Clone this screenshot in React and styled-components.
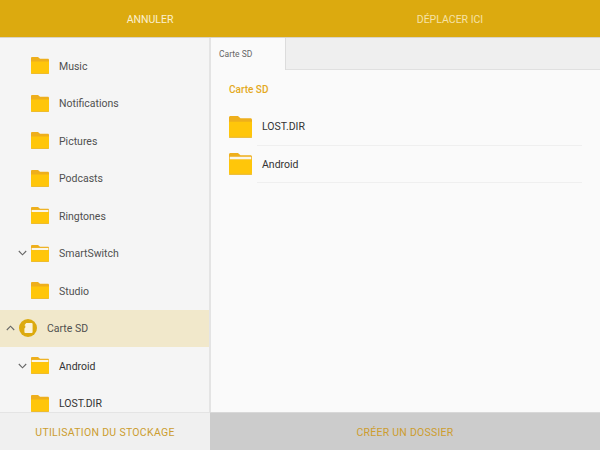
import styled, { createGlobalStyle } from "styled-components";

const GlobalStyle = createGlobalStyle`
  html, body {
    margin: 0;
    padding: 0;
    overflow: hidden;
  }
  body {
    font-family: Roboto, "Liberation Sans", sans-serif;
  }
`;

const Page = styled.div`
  width: 600px;
  height: 450px;
  display: flex;
  flex-direction: column;
  overflow: hidden;
  background: #fafafa;
`;

const TopBar = styled.div`
  height: 38px;
  box-sizing: border-box;
  flex: none;
  display: grid;
  grid-template-columns: 300px 300px;
  background: #dcaa0f;
  border-bottom: 1px solid #d8d4c8;
`;

const TopAction = styled.div`
  display: flex;
  align-items: center;
  justify-content: center;
  padding-top: 1px;
  font-size: 10.5px;
  color: ${({ $dim }) => ($dim ? "#f6e2a6" : "#fbf0cf")};
`;

const Body = styled.div`
  flex: 1;
  min-height: 0;
  display: flex;
`;

const Sidebar = styled.div`
  width: 211px;
  box-sizing: border-box;
  flex: none;
  padding-top: 9px;
  background: #f5f5f5;
  border-right: 2px solid #e4e4e4;
  overflow: hidden;
`;

const TreeRow = styled.div`
  height: 37.5px;
  display: flex;
  align-items: center;
  padding-left: ${({ $root }) => ($root ? "6px" : "18px")};
  background: ${({ $selected }) => ($selected ? "#f1e8cb" : "transparent")};
`;

const Chevron = styled.svg`
  width: 9px;
  height: 6px;
  flex: none;
  fill: none;
  stroke: #666;
  stroke-width: 1.1;
`;

const ChevronSlot = styled.div`
  width: 13px;
  flex: none;
  display: flex;
  align-items: center;
`;

const TreeLabel = styled.span`
  margin-left: 10px;
  padding-top: 1px;
  font-size: 10.5px;
  color: ${({ $dark }) => ($dark ? "#333" : "#505050")};
`;

const SdBadge = styled.div`
  width: 18px;
  height: 18px;
  flex: none;
  border-radius: 50%;
  background: #dcaa0f;
  display: flex;
  align-items: center;
  justify-content: center;
`;

const Main = styled.div`
  flex: 1;
  min-width: 0;
  display: flex;
  flex-direction: column;
`;

const TabStrip = styled.div`
  height: 32px;
  box-sizing: border-box;
  flex: none;
  display: flex;
  background: #efefef;
  border-bottom: 1px solid #e0e0e0;
`;

const Tab = styled.div`
  width: 75px;
  height: 32px;
  box-sizing: border-box;
  padding-left: 8px;
  display: flex;
  align-items: center;
  font-size: 8.5px;
  color: #666;
  background: #fafafa;
  border-right: 1px solid #dcdcdc;
`;

const Content = styled.div`
  flex: 1;
  padding: 12px 18px 0 18px;
`;

const PathTitle = styled.div`
  height: 14px;
  padding-top: 1px;
  line-height: 14px;
  font-size: 10px;
  font-weight: 500;
  color: #e4a91d;
  margin-bottom: 11px;
`;

const FileRow = styled.div`
  height: 37.5px;
  display: flex;
  align-items: center;
`;

const FileText = styled.div`
  flex: 1;
  height: 100%;
  margin-left: 5px;
  padding: 1px 0 0 5px;
  display: flex;
  align-items: center;
  font-size: 10.5px;
  color: #333;
  border-bottom: 1px solid #efefef;
  box-sizing: border-box;
`;

const BottomBar = styled.div`
  height: 38px;
  flex: none;
  display: flex;
`;

const BottomAction = styled.div`
  display: flex;
  align-items: center;
  justify-content: center;
  padding-top: 1px;
  font-size: 10.5px;
  letter-spacing: ${({ $wide }) => ($wide ? "0.25px" : "0.3px")};
  color: #cc9d2f;
  width: ${({ $wide }) => ($wide ? "390px" : "210px")};
  background: ${({ $wide }) => ($wide ? "#cccccc" : "#f0f0f0")};
  border-top: 1px solid ${({ $wide }) => ($wide ? "#d8d8d8" : "#e4e4e4")};
  box-sizing: border-box;
`;

const FolderSvg = styled.svg`
  flex: none;
`;

const FolderIcon = ({ open, size = 18 }) => (
  <FolderSvg width={size} height={size * 0.95} viewBox="0 0 18 17">
    <path d="M0 1.200C0 .5 .5 0 1.200 0H7l2 1.800h7.800c.7 0 1.200 .5 1.200 1.200v4H0z" fill="#eeaf1c" />
    {open && <rect x="0.6" y="2.900" width="16.800" height="2.200" fill="#faf6ea" />}
    <path
      d={
        open
          ? "M0 5.100H18V15.800c0 .7 -.5 1.200 -1.200 1.200H1.200C.5 17 0 16.500 0 15.800z"
          : "M0 4.400H18V15.800c0 .7 -.5 1.200 -1.200 1.200H1.200C.5 17 0 16.500 0 15.800z"
      }
      fill="#ffc60a"
    />
    <rect x="0" y="16.200" width="18" height="0.800" fill="#e9b93a" />
  </FolderSvg>
);

const ChevronIcon = ({ up }) => (
  <Chevron viewBox="0 0 9 6">
    <path d={up ? "M.8 5L4.500 1.200 8.200 5" : "M.8 1L4.500 4.800 8.200 1"} />
  </Chevron>
);

const tree = [
  { name: "Music" },
  { name: "Notifications" },
  { name: "Pictures" },
  { name: "Podcasts" },
  { name: "Ringtones", open: true },
  { name: "SmartSwitch", open: true, expanded: true },
  { name: "Studio" },
];

const App = () => {
  return (
    <Page>
      <GlobalStyle />
      <TopBar>
        <TopAction>ANNULER</TopAction>
        <TopAction $dim>DÉPLACER ICI</TopAction>
      </TopBar>
      <Body>
        <Sidebar>
          {tree.map((item) => (
            <TreeRow key={item.name}>
              <ChevronSlot>{item.expanded && <ChevronIcon />}</ChevronSlot>
              <FolderIcon open={item.open} />
              <TreeLabel>{item.name}</TreeLabel>
            </TreeRow>
          ))}
          <TreeRow $root $selected>
            <ChevronSlot>
              <ChevronIcon up />
            </ChevronSlot>
            <SdBadge>
              <svg width="9" height="10" viewBox="0 0 9 11">
                <path d="M2 0h6c.6 0 1 .4 1 1v9c0 .6 -.4 1 -1 1H1c-.6 0 -1 -.4 -1 -1V6l1 -1V3L0 2.500z" fill="#fbf3dc" />
              </svg>
            </SdBadge>
            <TreeLabel>Carte SD</TreeLabel>
          </TreeRow>
          <TreeRow>
            <ChevronSlot>
              <ChevronIcon />
            </ChevronSlot>
            <FolderIcon open />
            <TreeLabel $dark>Android</TreeLabel>
          </TreeRow>
          <TreeRow>
            <ChevronSlot />
            <FolderIcon />
            <TreeLabel $dark>LOST.DIR</TreeLabel>
          </TreeRow>
        </Sidebar>
        <Main>
          <TabStrip>
            <Tab>Carte SD</Tab>
          </TabStrip>
          <Content>
            <PathTitle>Carte SD</PathTitle>
            <FileRow>
              <FolderIcon size={23} />
              <FileText>LOST.DIR</FileText>
            </FileRow>
            <FileRow>
              <FolderIcon size={23} open />
              <FileText>Android</FileText>
            </FileRow>
          </Content>
        </Main>
      </Body>
      <BottomBar>
        <BottomAction>UTILISATION DU STOCKAGE</BottomAction>
        <BottomAction $wide>CRÉER UN DOSSIER</BottomAction>
      </BottomBar>
    </Page>
  );
};

export default App;
